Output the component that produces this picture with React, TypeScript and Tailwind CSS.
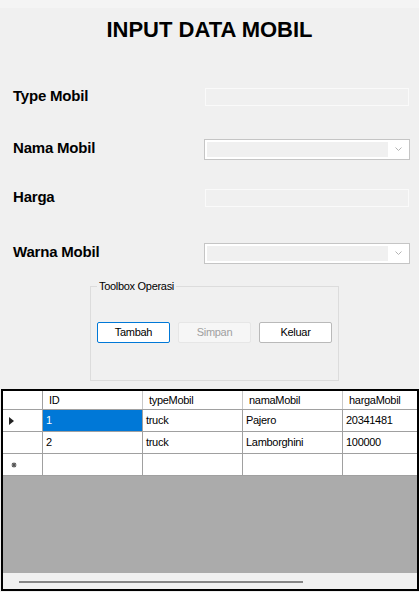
const FONT = "font-['Liberation_Sans',Arial,sans-serif]";

type Row = { id: string; type: string; nama: string; harga: string };

const rows: Row[] = [
  { id: "1", type: "truck", nama: "Pajero", harga: "20341481" },
  { id: "2", type: "truck", nama: "Lamborghini", harga: "100000" },
];

function TextBox() {
  return <div className="mr-[10px] w-[204px] h-[18px] border border-[#fafafa] bg-[#f0f0f0]" />;
}

function Combo() {
  return (
    <div className="mr-[9px] w-[206px] h-[21px] border border-[#c5c5c5] bg-white p-[2px] flex">
      <div className="flex-1 bg-[#f0f0f0]" />
      <div className="w-[19px] flex items-center justify-center">
        <svg width="7" height="4" viewBox="0 0 7 4" className="ml-[1px]">
          <polyline points="0.5,0.5 3.5,3.5 6.5,0.5" fill="none" stroke="#b4b4b4" strokeWidth="1" />
        </svg>
      </div>
    </div>
  );
}

function FieldRow({ label, className = "", children }: { label: string; className?: string; children: React.ReactNode }) {
  return (
    <div className={`h-[22px] pl-[13px] flex items-center ${className}`}>
      <span className="flex-1 pb-[3px] text-[15px] font-bold tracking-[-0.2px] text-black leading-none">{label}</span>
      {children}
    </div>
  );
}

function Btn({ label, kind }: { label: string; kind: "focus" | "disabled" | "normal" }) {
  const style =
    kind === "focus"
      ? "border-[#0078d7] bg-white text-black"
      : kind === "disabled"
        ? "border-[#e6e6e6] bg-[#f6f6f6] text-[#a0a0a0]"
        : "border-[#b9b9b9] bg-white text-black";
  return (
    <div className={`w-[73px] h-[21px] rounded-[2px] border flex items-center justify-center text-[11px] tracking-[-0.3px] ${style}`}>
      {label}
    </div>
  );
}

function Cell({ children, className = "" }: { children?: React.ReactNode; className?: string }) {
  return (
    <div className={`w-[100px] shrink-0 h-full border-r border-[#a0a0a0] flex items-center pl-[3px] ${className}`}>
      {children}
    </div>
  );
}

export default function App() {
  return (
    <div className={`w-[419px] h-[592px] bg-[#f0f0f0] flex flex-col overflow-hidden ${FONT}`}>
      <div className="h-[8px] bg-[#f4f4f4]" />

      {/* Title */}
      <h1 className="mt-[10px] h-[23px] leading-[23px] text-center text-[22px] font-bold text-black">
        INPUT DATA MOBIL
      </h1>

      {/* Fields */}
      <div className="mt-[45px] flex flex-col">
        <FieldRow label="Type Mobil">
          <TextBox />
        </FieldRow>
        <FieldRow label="Nama Mobil" className="mt-[30px]">
          <Combo />
        </FieldRow>
        <FieldRow label="Harga" className="mt-[27px]">
          <TextBox />
        </FieldRow>
        <FieldRow label="Warna Mobil" className="mt-[33px]">
          <Combo />
        </FieldRow>
      </div>

      {/* Toolbox */}
      <fieldset className="mt-[15px] ml-[90px] w-[249px] border border-[#dcdcdc]">
        <legend className="ml-[6px] px-[2px] text-[11px] leading-[14px] tracking-[-0.3px] text-black">
          Toolbox Operasi
        </legend>
        <div className="h-[87px] pt-[29px] pl-[6px] flex items-start gap-[8px]">
          <Btn label="Tambah" kind="focus" />
          <Btn label="Simpan" kind="disabled" />
          <Btn label="Keluar" kind="normal" />
        </div>
      </fieldset>

      {/* Data grid */}
      <div className="ml-[1px] mt-[8px] w-[418px] h-[202px] border-2 border-black flex flex-col overflow-hidden text-[11px] tracking-[-0.3px] text-black">
        <div className="h-[19px] shrink-0 flex bg-white border-b border-[#a0a0a0]">
          <div className="w-[40px] shrink-0 border-r border-[#a0a0a0]" />
          {["ID", "typeMobil", "namaMobil", "hargaMobil"].map((h) => (
            <div key={h} className="w-[100px] shrink-0 border-r border-[#c8c8c8] flex items-center pl-[6px]">
              {h}
            </div>
          ))}
        </div>

        {rows.map((r, i) => (
          <div key={r.id} className="h-[22px] shrink-0 flex bg-white border-b border-[#a0a0a0]">
            <div className="w-[40px] shrink-0 h-full border-r border-[#a0a0a0] flex items-center pl-[6px]">
              {i === 0 && (
                <svg width="5" height="8" viewBox="0 0 5 8">
                  <polygon points="0,0 5,4 0,8" fill="#222" />
                </svg>
              )}
            </div>
            <Cell className={i === 0 ? "bg-[#0078d7] text-white" : ""}>{r.id}</Cell>
            <Cell>{r.type}</Cell>
            <Cell>{r.nama}</Cell>
            <Cell>{r.harga}</Cell>
          </div>
        ))}

        <div className="h-[22px] shrink-0 flex bg-white border-b border-[#a0a0a0]">
          <div className="w-[40px] shrink-0 h-full border-r border-[#a0a0a0] flex items-center pl-[8px]">
            <svg width="6" height="6" viewBox="0 0 6 6">
              <path d="M3 0.5v5M0.5 3h5M1.2 1.2l3.6 3.6M4.8 1.2l-3.6 3.6" stroke="#555" strokeWidth="1.2" />
            </svg>
          </div>
          <Cell />
          <Cell />
          <Cell />
          <Cell />
        </div>

        <div className="flex-1 bg-[#ababab]" />

        <div className="h-[16px] shrink-0 bg-[#f0f0f0] pt-[2px] pl-[16px] flex items-center">
          <div className="w-[284px] h-[2px] bg-[#858585]" />
        </div>
      </div>
    </div>
  );
}
